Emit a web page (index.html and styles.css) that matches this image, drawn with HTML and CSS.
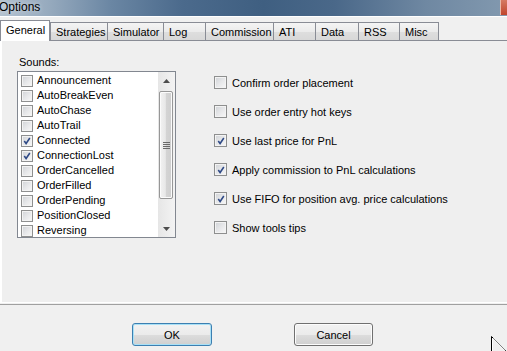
FILE: index.html
```html
<!DOCTYPE html>
<html>
<head>
<meta charset="utf-8">
<link rel="stylesheet" href="styles.css">
</head>
<body>
<div class="titlebar">
  <span class="title">Options</span>
  <span class="close"></span>
</div>
<div class="tabs">
  <div class="tab active">General</div>
  <div class="tab">Strategies</div>
  <div class="tab">Simulator</div>
  <div class="tab">Log</div>
  <div class="tab">Commission</div>
  <div class="tab">ATI</div>
  <div class="tab">Data</div>
  <div class="tab">RSS</div>
  <div class="tab">Misc</div>
</div>
<div class="page">
  <div class="sounds">
    <div class="label">Sounds:</div>
    <div class="listbox">
      <div class="items">
        <div class="item"><span class="cb"></span>Announcement</div>
        <div class="item"><span class="cb"></span>AutoBreakEven</div>
        <div class="item"><span class="cb"></span>AutoChase</div>
        <div class="item"><span class="cb"></span>AutoTrail</div>
        <div class="item"><span class="cb on"><svg viewBox="0 0 11 11"><path d="M2.5 5.5 L4.5 8.3 L8.6 2.2"/></svg></span>Connected</div>
        <div class="item"><span class="cb on"><svg viewBox="0 0 11 11"><path d="M2.5 5.5 L4.5 8.3 L8.6 2.2"/></svg></span>ConnectionLost</div>
        <div class="item"><span class="cb"></span>OrderCancelled</div>
        <div class="item"><span class="cb"></span>OrderFilled</div>
        <div class="item"><span class="cb"></span>OrderPending</div>
        <div class="item"><span class="cb"></span>PositionClosed</div>
        <div class="item"><span class="cb"></span>Reversing</div>
      </div>
      <div class="vscroll">
        <div class="sbtn"><svg viewBox="0 0 7 4"><path d="M0 4 L3.5 0 L7 4Z"/></svg></div>
        <div class="thumb"><svg viewBox="0 0 7 7"><path d="M0 0.5H7M0 2.5H7M0 4.5H7M0 6.5H7"/></svg></div>
        <div class="track"></div>
        <div class="sbtn"><svg viewBox="0 0 7 4"><path d="M0 0 L3.5 4 L7 0Z"/></svg></div>
      </div>
    </div>
  </div>
  <div class="options">
    <div class="opt"><span class="cb"></span>Confirm order placement</div>
    <div class="opt"><span class="cb"></span>Use order entry hot keys</div>
    <div class="opt"><span class="cb on"><svg viewBox="0 0 11 11"><path d="M2.5 5.5 L4.5 8.3 L8.6 2.2"/></svg></span>Use last price for PnL</div>
    <div class="opt"><span class="cb on"><svg viewBox="0 0 11 11"><path d="M2.5 5.5 L4.5 8.3 L8.6 2.2"/></svg></span>Apply commission to PnL calculations</div>
    <div class="opt"><span class="cb on"><svg viewBox="0 0 11 11"><path d="M2.5 5.5 L4.5 8.3 L8.6 2.2"/></svg></span>Use FIFO for position avg. price calculations</div>
    <div class="opt"><span class="cb"></span>Show tools tips</div>
  </div>
</div>
<div class="sep"></div>
<div class="footer">
  <button class="btn default">OK</button>
  <button class="btn cancel">Cancel</button>
</div>
<svg class="cursor" width="16" height="16" viewBox="0 0 16 16"><path d="M0.5 0.5 L0.5 16 M0.5 0.5 L15 15" fill="none" stroke="#000" stroke-width="1"/><path d="M1.5 2.5 L1.5 16 M1.5 2 L14 14.5" fill="none" stroke="#fff" stroke-width="1"/></svg>
</body>
</html>
```

FILE: styles.css
```css
html, body {
  margin: 0;
  padding: 0;
}
body {
  width: 507px;
  height: 351px;
  overflow: hidden;
  position: relative;
  background: #f0f0f0;
  font-family: "Liberation Sans", Arial, sans-serif;
  font-size: 11px;
  color: #000;
}
.titlebar {
  height: 16px;
  border-bottom: 1px solid #ffffff;
  display: flex;
  justify-content: space-between;
  align-items: flex-start;
  background: linear-gradient(90deg, #b3c1cf 0%, #95a9bd 10%, #6a86a3 22%, #4b6a8c 36%, #3f5f81 52%, #4a6889 66%, #6f88a2 84%, #8299af 100%);
}
.title {
  font-size: 12px;
  line-height: 15px;
  margin-left: -1px;
  color: #000;
  text-shadow: 0 0 4px rgba(255,255,255,0.6);
}
.close {
  width: 6px;
  height: 15px;
  border-left: 1px solid #e8b8a8;
  background: linear-gradient(#d57a64, #c0452c);
}
.tabs {
  margin-top: 3px;
  height: 20px;
  display: grid;
  grid-template-columns: 50px 57px 56px 42px 68px 42px 43px 41px 40px;
  align-items: end;
  position: relative;
  z-index: 1;
}
.tab {
  box-sizing: border-box;
  height: 18px;
  border: 1px solid #898c95;
  border-bottom: none;
  border-right: none;
  background: linear-gradient(#f4f4f4 0%, #ebebeb 50%, #dedede 51%, #d8d8d8 100%);
  padding: 2px 0 0 5px;
  line-height: 14px;
  white-space: nowrap;
}
.tab:last-child {
  border-right: 1px solid #898c95;
}
.tab.active {
  height: 21px;
  margin-bottom: -1px;
  background: #ffffff;
  border-right: 1px solid #898c95;
  padding: 2px 0 0 5px;
}
.page {
  box-sizing: border-box;
  height: 263px;
  border-top: 1px solid #898c95;
  border-left: 2px solid #ffffff;
  border-bottom: 1px solid #ffffff;
  background: #efefef;
  display: flex;
  padding: 15px 0 0 15px;
}
.label {
  margin-left: 2px;
  line-height: 13px;
  height: 13px;
}
.listbox {
  margin-top: 2px;
  box-sizing: border-box;
  width: 159px;
  height: 167px;
  border: 1px solid #828790;
  background: #ffffff;
  display: flex;
  overflow: hidden;
}
.items {
  flex: 1;
  padding-top: 1px;
}
.item {
  height: 15px;
  display: flex;
  align-items: center;
  padding-left: 3px;
  line-height: 15px;
  white-space: nowrap;
}
.item .cb {
  margin-right: 4px;
}
.cb {
  box-sizing: border-box;
  width: 12px;
  height: 12px;
  flex: none;
  border: 1px solid #8e8f8f;
  background: linear-gradient(135deg, #cfd2d6 0%, #e6e7e9 50%, #f8f8f8 100%);
  box-shadow: inset 0 0 0 1px #f3f3f3;
  display: inline-flex;
  align-items: center;
  justify-content: center;
}
.cb svg {
  width: 10px;
  height: 10px;
}
.cb svg path {
  fill: none;
  stroke: #2f4a86;
  stroke-width: 1.7;
}
.vscroll {
  width: 17px;
  flex: none;
  display: flex;
  flex-direction: column;
  background: linear-gradient(90deg, #e6e6e6, #f3f3f3);
}
.sbtn {
  height: 17px;
  display: flex;
  align-items: center;
  justify-content: center;
}
.sbtn svg {
  width: 7px;
  height: 4px;
}
.sbtn svg path {
  fill: #4d4d4d;
}
.thumb {
  box-sizing: border-box;
  margin: 2px 2px 0 1px;
  height: 108px;
  border: 1px solid #979797;
  border-radius: 2px;
  background: linear-gradient(90deg, #f2f2f2 0%, #e8e8e8 45%, #d4d4d4 50%, #cfcfcf 100%);
  box-shadow: inset 0 0 0 1px #fbfbfb;
  display: flex;
  align-items: center;
  justify-content: center;
}
.thumb svg {
  width: 7px;
  height: 7px;
}
.thumb svg path {
  stroke: #6a6a6a;
  stroke-width: 1;
  fill: none;
}
.track {
  flex: 1;
}
.options {
  margin-left: 38px;
  padding-top: 18px;
  display: flex;
  flex-direction: column;
  gap: 12px;
}
.opt {
  height: 17px;
  display: flex;
  align-items: center;
  white-space: nowrap;
}
.opt .cb {
  width: 13px;
  height: 13px;
  margin-right: 5px;
}
.sep {
  margin-top: 1px;
  height: 1px;
  background: #a0a0a0;
}
.footer {
  padding: 18px 0 0 132px;
  display: flex;
}
.btn {
  box-sizing: border-box;
  width: 80px;
  height: 23px;
  padding: 0;
  font-family: "Liberation Sans", Arial, sans-serif;
  font-size: 11px;
  color: #000;
  border: 1px solid #707070;
  border-radius: 3px;
  background: linear-gradient(#f2f2f2 0%, #ebebeb 50%, #dddddd 51%, #cfcfcf 100%);
  box-shadow: inset 0 0 0 1px #fcfcfc;
}
.btn.default {
  border-color: #3c7fb1;
  box-shadow: inset 0 0 0 1px #a8e0f6;
}
.btn.cancel {
  margin-left: 82px;
  width: 79px;
}
.cursor {
  position: absolute;
  left: 491px;
  top: 336px;
}
```
